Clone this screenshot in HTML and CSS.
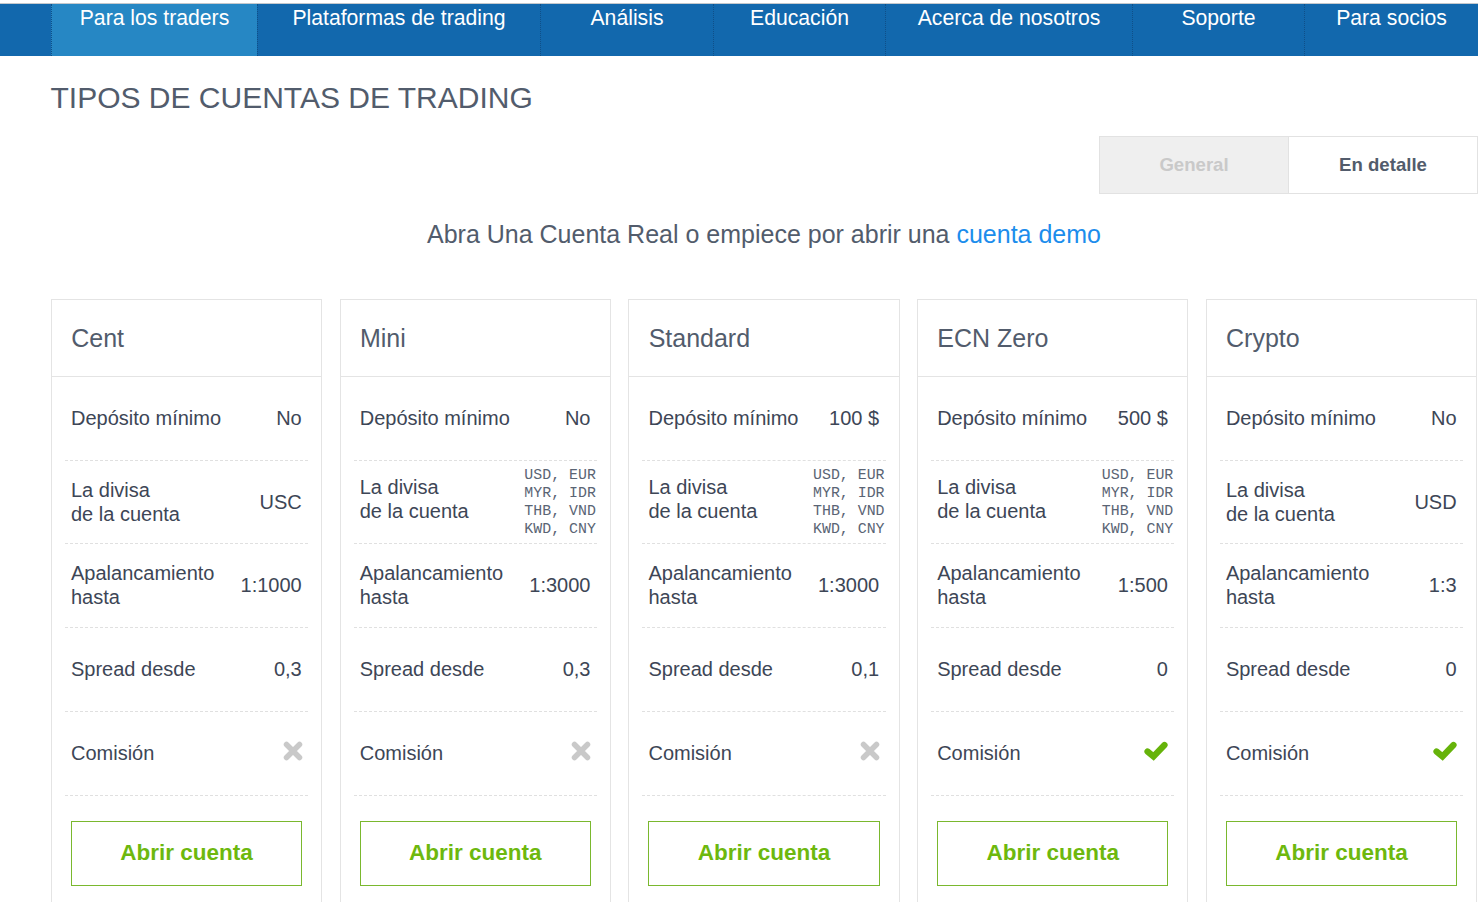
FILE: index.html
```html
<!DOCTYPE html>
<html lang="es">
<head>
<meta charset="utf-8">
<title>Tipos de cuentas de trading</title>
<link rel="stylesheet" href="styles.css">
</head>
<body>
<svg class="defs" width="0" height="0" aria-hidden="true">
  <symbol id="icon-x" viewBox="0 0 20 20"><path d="M3.5 3.5 16.500 16.500M16.500 3.500 3.500 16.500" fill="none" stroke="currentColor" stroke-width="5.500" stroke-linecap="round"/></symbol>
  <symbol id="icon-check" viewBox="0 0 24 20"><path d="M3.500 10.500 9.500 15.500 20.500 4" fill="none" stroke="currentColor" stroke-width="6.200" stroke-linecap="round" stroke-linejoin="miter"/></symbol>
</svg>
<nav class="topnav">
  <a class="nav-item nav-active">Para los traders</a>
  <a class="nav-item">Plataformas de trading</a>
  <a class="nav-item">Análisis</a>
  <a class="nav-item">Educación</a>
  <a class="nav-item">Acerca de nosotros</a>
  <a class="nav-item">Soporte</a>
  <a class="nav-item">Para socios</a>
</nav>
<main class="content">
  <h1 class="page-title">TIPOS DE CUENTAS DE TRADING</h1>
  <div class="toggle-row">
    <div class="toggle">
      <span class="toggle-btn toggle-off">General</span>
      <span class="toggle-btn toggle-on">En detalle</span>
    </div>
  </div>
  <p class="lead">Abra Una Cuenta Real o empiece por abrir una <a class="lead-link">cuenta demo</a></p>
  <section class="cards">
    <article class="card">
      <h2 class="card-title">Cent</h2>
      <div class="row"><span>Depósito mínimo</span><span>No</span></div>
      <div class="row"><span>La divisa<br>de la cuenta</span><span>USC</span></div>
      <div class="row"><span>Apalancamiento<br>hasta</span><span>1:1000</span></div>
      <div class="row"><span>Spread desde</span><span>0,3</span></div>
      <div class="row"><span>Comisión</span><svg class="icon icon-no"><use href="#icon-x"/></svg></div>
      <a class="open-btn">Abrir cuenta</a>
    </article>
    <article class="card">
      <h2 class="card-title">Mini</h2>
      <div class="row"><span>Depósito mínimo</span><span>No</span></div>
      <div class="row row-multi"><span class="multi-label">La divisa<br>de la cuenta</span><span class="currencies">USD, EUR<br>MYR, IDR<br>THB, VND<br>KWD, CNY</span></div>
      <div class="row"><span>Apalancamiento<br>hasta</span><span>1:3000</span></div>
      <div class="row"><span>Spread desde</span><span>0,3</span></div>
      <div class="row"><span>Comisión</span><svg class="icon icon-no"><use href="#icon-x"/></svg></div>
      <a class="open-btn">Abrir cuenta</a>
    </article>
    <article class="card">
      <h2 class="card-title">Standard</h2>
      <div class="row"><span>Depósito mínimo</span><span>100 $</span></div>
      <div class="row row-multi"><span class="multi-label">La divisa<br>de la cuenta</span><span class="currencies">USD, EUR<br>MYR, IDR<br>THB, VND<br>KWD, CNY</span></div>
      <div class="row"><span>Apalancamiento<br>hasta</span><span>1:3000</span></div>
      <div class="row"><span>Spread desde</span><span>0,1</span></div>
      <div class="row"><span>Comisión</span><svg class="icon icon-no"><use href="#icon-x"/></svg></div>
      <a class="open-btn">Abrir cuenta</a>
    </article>
    <article class="card">
      <h2 class="card-title">ECN Zero</h2>
      <div class="row"><span>Depósito mínimo</span><span>500 $</span></div>
      <div class="row row-multi"><span class="multi-label">La divisa<br>de la cuenta</span><span class="currencies">USD, EUR<br>MYR, IDR<br>THB, VND<br>KWD, CNY</span></div>
      <div class="row"><span>Apalancamiento<br>hasta</span><span>1:500</span></div>
      <div class="row"><span>Spread desde</span><span>0</span></div>
      <div class="row"><span>Comisión</span><svg class="icon icon-yes"><use href="#icon-check"/></svg></div>
      <a class="open-btn">Abrir cuenta</a>
    </article>
    <article class="card">
      <h2 class="card-title">Crypto</h2>
      <div class="row"><span>Depósito mínimo</span><span>No</span></div>
      <div class="row"><span>La divisa<br>de la cuenta</span><span>USD</span></div>
      <div class="row"><span>Apalancamiento<br>hasta</span><span>1:3</span></div>
      <div class="row"><span>Spread desde</span><span>0</span></div>
      <div class="row"><span>Comisión</span><svg class="icon icon-yes"><use href="#icon-check"/></svg></div>
      <a class="open-btn">Abrir cuenta</a>
    </article>
  </section>
</main>
</body>
</html>
```
FILE: styles.css
```css
* { box-sizing: border-box; }
html, body { margin: 0; height: 902px; overflow: hidden; background: #fff; }
body {
  padding-top: 3px;
  font-family: "Liberation Sans", Arial, sans-serif;
  color: #3d4656;
}
.defs { position: absolute; }

.topnav {
  display: grid;
  grid-template-columns: 206px 283px 173px 172px 247px 172px 1fr;
  height: 53px;
  padding-left: 51px;
  background: #1268ad;
  border-top: 1px solid #c4c8cc;
}
.nav-item {
  padding-top: 1px;
  text-align: center;
  font-size: 21.2px;
  line-height: 26px;
  color: #fff;
  border-left: 1px dotted #0f4f88;
}
.nav-active { background: #2687c4; }

.content { padding: 0 1px 0 51px; }
.page-title {
  margin: 22px 0 0 -0.5px;
  font-size: 30px;
  line-height: 40px;
  font-weight: 400;
  color: #525c6c;
}
.toggle-row { display: flex; justify-content: flex-end; margin: 18px -1px 0 0; }
.toggle { display: flex; width: 379px; height: 58px; border: 1px solid #e2e2e2; }
.toggle-btn {
  flex: 1;
  display: flex;
  align-items: center;
  justify-content: center;
  font-size: 18.6px;
  font-weight: 700;
}
.toggle-off { background: #efefef; color: #c9c9c9; border-right: 1px solid #e2e2e2; }
.toggle-on { color: #525c6c; }
.lead {
  margin: 26px 0 0;
  text-align: center;
  font-size: 25px;
  line-height: 28px;
  color: #525c6c;
}
.lead-link { color: #1c8dec; }

.cards {
  display: grid;
  grid-template-columns: repeat(5, 1fr);
  column-gap: 17.6px;
  margin-top: 51px;
}
.card {
  height: 640px;
  border: 1px solid #e4e4e4;
}
.card-title {
  margin: 0;
  height: 77px;
  padding-left: 19.200px;
  font-size: 25px;
  font-weight: 400;
  line-height: 77px;
  color: #525c6c;
  border-bottom: 1px solid #e4e4e4;
}
.row {
  display: flex;
  align-items: center;
  justify-content: space-between;
  height: 84px;
  margin: 0 13px;
  padding: 0 6.400px 2px 6px;
  font-size: 20px;
  line-height: 24px;
  border-bottom: 1px dashed #e0e0e0;
}
.row:nth-of-type(2) { height: 83px; padding-bottom: 0; }
.row-multi { padding-right: 1px; }
.multi-label { position: relative; top: -3px; }
.currencies {
  font-family: "Liberation Mono", monospace;
  font-size: 14.9px;
  line-height: 18px;
  white-space: pre;
  color: #5a6474;
}
.icon { display: block; position: relative; top: -2px; }
.icon-no { width: 20px; height: 20px; margin-right: -1px; color: #c9c9c9; }
.icon-yes { width: 24px; height: 20px; color: #66b30a; }
.open-btn {
  display: block;
  height: 65px;
  margin: 25px 19px 0;
  border: 1px solid #7ab82e;
  text-align: center;
  font-size: 22.500px;
  font-weight: 700;
  line-height: 62px;
  color: #6db80e;
}
```
